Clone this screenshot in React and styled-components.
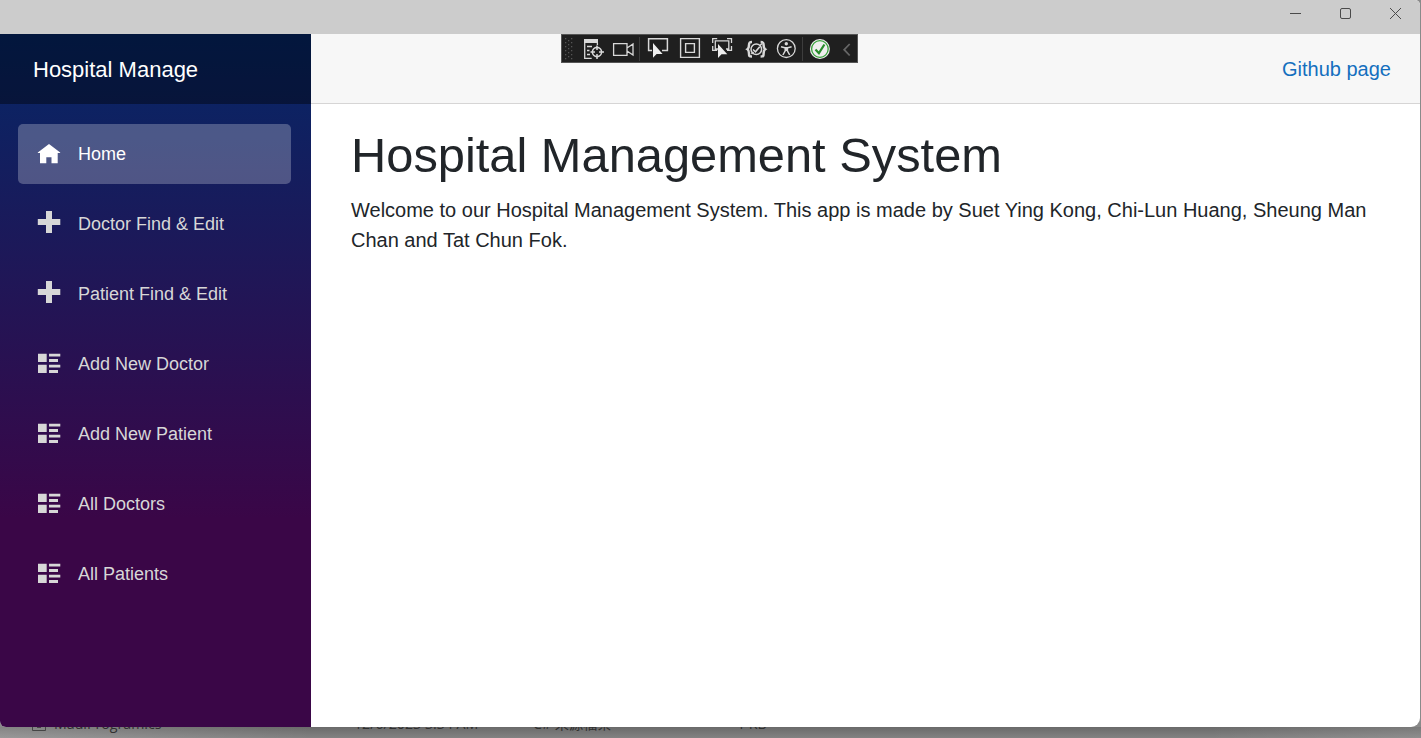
import React from "react";
import styled, { createGlobalStyle } from "styled-components";

const GlobalStyle = createGlobalStyle`
  * { box-sizing: border-box; }
  body {
    margin: 0;
    background: #808080;
    font-family: "Liberation Sans", Arial, sans-serif;
    font-size: 20px;
    line-height: 1.5;
    color: #212529;
    overflow: hidden;
  }
`;

const Desktop = styled.div`
  position: relative;
  width: 1421px;
  height: 738px;
  overflow: hidden;
  background: #8a8a8a;
`;

const AppWindow = styled.div`
  position: relative;
  z-index: 1;
  display: flex;
  flex-direction: column;
  width: 1420px;
  height: 727px;
  border-radius: 0 5px 9px 6px;
  overflow: hidden;
  background: #fff;
`;

const TitleBar = styled.div`
  display: flex;
  flex: none;
  justify-content: flex-end;
  height: 34px;
  background: #ccc;
`;

const CaptionButton = styled.div`
  display: flex;
  justify-content: center;
  width: 50px;
  padding-top: 7px;
`;

const Page = styled.div`
  display: flex;
  flex: 1;
`;

const Sidebar = styled.aside`
  width: 311px;
  background-image: linear-gradient(180deg, rgb(5, 39, 103) 0%, #3a0647 70%);
`;

const Brand = styled.div`
  display: flex;
  align-items: center;
  height: 70px;
  padding-left: 33px;
  background: rgba(0, 0, 0, 0.4);
  color: #fff;
  font-size: 22px;
`;

const Nav = styled.nav`
  display: flex;
  flex-direction: column;
  gap: 10px;
  padding: 20px 20px 0 18px;
`;

const NavItem = styled.a`
  display: flex;
  align-items: center;
  height: 60px;
  padding-left: 19px;
  border-radius: 5px;
  font-size: 18px;
  color: ${(p) => (p.$active ? "#fff" : "#d7d7d7")};
  background: ${(p) => (p.$active ? "rgba(255, 255, 255, 0.25)" : "transparent")};
`;

const NavIcon = styled.svg`
  flex: none;
  width: 24px;
  height: 24px;
  margin-right: 17px;
  fill: currentColor;
  overflow: visible;
`;

const Main = styled.main`
  flex: 1;
`;

const TopRow = styled.div`
  display: flex;
  align-items: center;
  justify-content: flex-end;
  height: 70px;
  padding-right: 29px;
  background: #f7f7f7;
  border-bottom: 1px solid #d6d5d5;
`;

const Link = styled.a`
  color: #146fbe;
`;

const Content = styled.article`
  padding: 21px 29px 0 40px;
`;

const Heading = styled.h1`
  margin: 0 0 10px;
  font-size: 48.8px;
  font-weight: 400;
  line-height: 60px;
`;

const Text = styled.p`
  margin: 0;
`;

const DebugBar = styled.div`
  position: absolute;
  z-index: 2;
  left: 561px;
  top: 34px;
  width: 297px;
  height: 29px;
  border: 1px solid #555;
  background: #1f1f1f;
`;

const DebugIcons = styled.svg`
  display: block;
  width: 295px;
  height: 27px;
`;

const FileStrip = styled.div`
  display: grid;
  grid-template-columns: 54px 300px 179px 204px 1fr;
  height: 11px;
  overflow: hidden;
  background: linear-gradient(90deg, rgba(255, 255, 255, 0.18), rgba(255, 255, 255, 0) 22%, rgba(255, 255, 255, 0) 85%, rgba(255, 255, 255, 0.1)),
    linear-gradient(#6a6a6a, #828282);
  color: #303030;
  font-family: "Open Sans", "Noto Sans CJK TC", sans-serif;
  font-size: 14.2px;
  line-height: 20px;
`;

const FileCell = styled.span`
  margin-top: -13px;
  height: 20px;
  white-space: pre;
`;

const FileIcon = styled.svg`
  width: 54px;
  height: 11px;
`;

function HomeIcon() {
  return (
    <NavIcon viewBox="0 0 24 24">
      <path d="M12 2 .8 10.600V11H3v10.300h6.300V15.300h5.200v6h6.200V11h2.500v-.4z" />
    </NavIcon>
  );
}

function PlusIcon() {
  return (
    <NavIcon viewBox="0 0 24 24">
      <path d="M9 -1h6v8h8.300v6H15v8H9v-8H.8V7H9z" />
    </NavIcon>
  );
}

function ListIcon() {
  return (
    <NavIcon viewBox="0 0 24 24">
      <path d="M1 1.700h8.700V10H1zM1 12.700h8.700V21H1zM12 1.700h11.300v2.700H12zM12 7h9v3h-9zM12 12.700h11.300v2.800H12zM12 18h9v3h-9z" />
    </NavIcon>
  );
}

const items = [
  ["Home", HomeIcon],
  ["Doctor Find & Edit", PlusIcon],
  ["Patient Find & Edit", PlusIcon],
  ["Add New Doctor", ListIcon],
  ["Add New Patient", ListIcon],
  ["All Doctors", ListIcon],
  ["All Patients", ListIcon],
];

const gripDots = [0, 1, 2, 3, 4, 5].flatMap((row) =>
  [4, 10].map((x) => [x, 3 + row * 4]).concat([[7, 5 + row * 4]])
).filter(([, y]) => y < 25);

function DebugToolbar() {
  return (
    <DebugBar>
      <DebugIcons viewBox="562 35 295 27" fill="none" stroke="#d8d8d8" strokeWidth="1.3">
        <g fill="#555" stroke="none">
          {gripDots.map(([x, y]) => (
            <rect key={`${x}-${y}`} x={562 + x - 1} y={35 + y} width="1.300" height="1.300" />
          ))}
        </g>
        <path d="M639.5 37v24M802.5 37v24" stroke="#3d3d3d" strokeWidth="1" />
        {/* live visual tree */}
        <path d="M584 39h14v4h-14z" fill="#d8d8d8" stroke="none" />
        <path d="M584.7 42v16.300h7M587 46.500h5M587 50.500h2.500M587 54.500h3M597.400 43v2" />
        <circle cx="597" cy="52" r="4.600" strokeWidth="1.600" />
        <path d="M597 45.500v4.500M597 54v5M590.500 52h4.500M599 52h5" strokeWidth="1.500" />
        {/* camera */}
        <path d="M613.600 43.600h13.400v11.800h-13.400zM627 48l6-4v11l-6-4" />
        {/* select element */}
        <path d="M652 50.500h-3.400V38.700h18.800v11.800H662" strokeWidth="1.500" />
        <path d="M653 43v14.700l3.600-3.700h6z" fill="#eee" stroke="none" />
        {/* layout adorners */}
        <path d="M680.600 38.600h18.800v18.800h-18.800zM685.600 43.600h8.800v8.800h-8.800z" strokeWidth="1.400" />
        {/* track focused element */}
        <path d="M712.700 43v-4.300h4.500M727 38.700h4.500V43M712.700 46v4.300h4.500M727 50.300h4.500V46M718 49h-2.700v-8.200h13.500V49H726" />
        <path d="M718 44v14l3.500-3.700h5.800z" fill="#eee" stroke="none" />
        {/* binding failures */}
        <path d="M752 42c-3 0-3 1-3 3 0 2.500 0 3.200-1.500 4.200 1.500 1 1.500 1.800 1.500 4.300 0 2.300 0 3 3 3M760.600 42c3 0 3 1 3 3 0 2.500 0 3.200 1.500 4.200-1.500 1-1.500 1.800-1.500 4.300 0 2.300 0 3-3 3" strokeWidth="2.500" />
        <circle cx="756.300" cy="49.300" r="5.300" fill="#1f1f1f" strokeWidth="1.500" />
        <path d="M753 49.500l2.500 2.300 4.200-5M751.500 54l2-2M759.500 46l2.500-2.500" strokeWidth="1.600" />
        {/* accessibility */}
        <circle cx="786.300" cy="48.600" r="8.900" />
        <circle cx="786.300" cy="43.800" r="1.700" fill="#d8d8d8" stroke="none" />
        <path d="M781 46.700l3.800 1h3l3.800-1M785.200 48v2.800l-2.300 4.200M787.400 48v2.800l2.300 4.200M786.300 47.500v3.500" strokeWidth="1.500" />
        {/* hot reload state */}
        <circle cx="819.900" cy="49" r="10" fill="#eee" stroke="none" />
        <circle cx="819.900" cy="49" r="8.300" stroke="#36a03a" strokeWidth="1.300" />
        <path d="M815.500 49.500l3.400 3.700 5.500-8.700" stroke="#278c2b" strokeWidth="2.200" />
        <path d="M849.700 44l-5.500 5.700 5.500 5.800" stroke="#666" strokeWidth="1.800" />
      </DebugIcons>
    </DebugBar>
  );
}

const captionShapes = [
  "M1 6.500h11",
  "M3 1.500h7q1.500 0 1.500 1.500v7q0 1.500-1.500 1.500H3Q1.500 11.500 1.500 10V3q0-1.500 1.500-1.500z",
  "M1 1l11 11M12 1L1 12",
];

export default function App() {
  return (
    <Desktop>
      <GlobalStyle />
      <AppWindow>
        <TitleBar>
          {captionShapes.map((d) => (
            <CaptionButton key={d}>
              <svg width="13" height="13" viewBox="0 0 13 13" fill="none" stroke="#4a4a4a">
                <path d={d} />
              </svg>
            </CaptionButton>
          ))}
        </TitleBar>
        <Page>
          <Sidebar>
            <Brand>Hospital Manage</Brand>
            <Nav>
              {items.map(([label, Icon], i) => (
                <NavItem key={label} $active={i === 0}>
                  <Icon />
                  {label}
                </NavItem>
              ))}
            </Nav>
          </Sidebar>
          <Main>
            <TopRow>
              <Link>Github page</Link>
            </TopRow>
            <Content>
              <Heading>Hospital Management System</Heading>
              <Text>
                Welcome to our Hospital Management System. This app is made by Suet Ying Kong, Chi-Lun Huang, Sheung Man
                Chan and Tat Chun Fok.
              </Text>
            </Content>
          </Main>
        </Page>
      </AppWindow>
      <DebugToolbar />
      <FileStrip>
        <FileIcon viewBox="0 0 54 11" fill="none" stroke="#454545">
          <path d="M32.500 0v3.500h13V0M37 .5h4" />
        </FileIcon>
        <FileCell>MauiProgram.cs</FileCell>
        <FileCell>12/6/2023 3:34 AM</FileCell>
        <FileCell>C# 來源檔案</FileCell>
        <FileCell>1 KB</FileCell>
      </FileStrip>
    </Desktop>
  );
}
